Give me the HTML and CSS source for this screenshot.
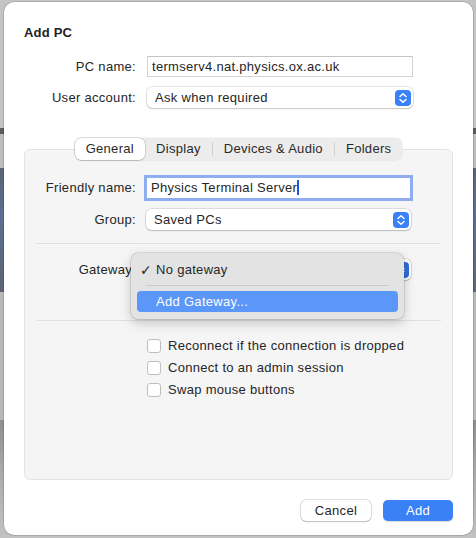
FILE: index.html
```html
<!DOCTYPE html>
<html>
<head>
<meta charset="utf-8">
<link rel="stylesheet" href="styles.css">
</head>
<body>
<div class="dialog">
  <div class="title">Add PC</div>
  <div class="form top-form">
    <label class="lbl">PC name:</label>
    <div class="field">termserv4.nat.physics.ox.ac.uk</div>
    <label class="lbl">User account:</label>
    <div class="popup">Ask when required
      <svg class="stepper" viewBox="0 0 16 16"><rect width="16" height="16" rx="4" fill="#3a80f6"/><path d="M5 6.5 L8 3.8 L11 6.5 M5 9.5 L8 12.2 L11 9.5" stroke="#fff" stroke-width="1.5" fill="none" stroke-linecap="round" stroke-linejoin="round"/></svg>
    </div>
  </div>

  <div class="tabs">
    <div class="tab selected">General</div>
    <div class="tab">Display</div>
    <div class="sep"></div>
    <div class="tab">Devices &amp; Audio</div>
    <div class="sep"></div>
    <div class="tab">Folders</div>
  </div>

  <div class="box">
    <div class="form box-form">
      <label class="lbl">Friendly name:</label>
      <div class="field focused">Physics Terminal Server<span class="caret"></span></div>
      <label class="lbl">Group:</label>
      <div class="popup">Saved PCs
        <svg class="stepper" viewBox="0 0 16 16"><rect width="16" height="16" rx="4" fill="#3a80f6"/><path d="M5 6.5 L8 3.8 L11 6.5 M5 9.5 L8 12.2 L11 9.5" stroke="#fff" stroke-width="1.5" fill="none" stroke-linecap="round" stroke-linejoin="round"/></svg>
      </div>
    </div>
    <div class="hr hr1"></div>
    <div class="form box-form gw-form">
      <label class="lbl">Gateway:</label>
      <div class="popup">
        <svg class="stepper" viewBox="0 0 16 16"><rect width="16" height="16" rx="4" fill="#2f6fdc"/><path d="M5 6.5 L8 3.8 L11 6.5 M5 9.5 L8 12.2 L11 9.5" stroke="#fff" stroke-width="1.5" fill="none" stroke-linecap="round" stroke-linejoin="round"/></svg>
      </div>
    </div>
    <div class="hr hr2"></div>
    <div class="checks">
      <div class="check"><span class="cb"></span>Reconnect if the connection is dropped</div>
      <div class="check"><span class="cb"></span>Connect to an admin session</div>
      <div class="check"><span class="cb"></span>Swap mouse buttons</div>
    </div>

    <div class="menu">
      <div class="item"><span class="tick">✓</span>No gateway</div>
      <div class="menu-sep"></div>
      <div class="item hl">Add Gateway...</div>
    </div>
  </div>

  <div class="buttons">
    <div class="btn cancel">Cancel</div>
    <div class="btn add">Add</div>
  </div>
</div>
</body>
</html>
```

FILE: styles.css
```css
html, body {
  margin: 0;
  padding: 0;
}
body {
  width: 476px;
  height: 538px;
  overflow: hidden;
  background:
    linear-gradient(to bottom, #c4c4c4 0, #c4c4c4 128px, #5d5d5d 128px, #5d5d5d 134px, #bdbdbd 134px, #bdbdbd 168px, #596474 168px, #5a6f92 215px, #5d6473 292px, #b9b9b9 292px, #b9b9b9 420px, #8f8f8f 420px, #a9a9a9 470px, #c2c2c2 538px);
  font-family: "Liberation Sans", Arial, sans-serif;
  font-size: 13px;
  letter-spacing: 0.3px;
  color: #262626;
}
.dialog {
  box-sizing: border-box;
  margin: 2px 3px 0 4px;
  width: 469px;
  height: 533px;
  background: #ffffff;
  border-radius: 10px;
  box-shadow: 0 0 0 0.5px rgba(0,0,0,0.25);
  padding: 22px 20px 0 20px;
}
.title {
  font-weight: bold;
  font-size: 13px;
  line-height: 18px;
  color: #222;
  letter-spacing: 0.2px;
}
.form {
  display: grid;
  grid-template-columns: 112px 266px;
  column-gap: 11px;
  row-gap: 10px;
  align-items: center;
}
.top-form {
  margin-top: 14px;
}
.lbl {
  text-align: right;
  white-space: nowrap;
  line-height: 16px;
}
.field {
  box-sizing: border-box;
  height: 21px;
  border: 1px solid #d3d3d3;
  border-top-color: #c4c4c4;
  background: #fff;
  padding: 0 4px;
  line-height: 19px;
  white-space: nowrap;
  overflow: hidden;
}
.popup {
  position: relative;
  box-sizing: border-box;
  height: 21px;
  background: #fff;
  border-radius: 5px;
  box-shadow: 0 0 0 0.5px rgba(0,0,0,0.2), 0 1px 1.5px rgba(0,0,0,0.15);
  padding: 0 8px;
  line-height: 21px;
  white-space: nowrap;
}
.stepper {
  position: absolute;
  right: 2px;
  top: 2.5px;
  width: 16px;
  height: 16px;
}
.tabs {
  position: relative;
  z-index: 1;
  display: flex;
  align-items: center;
  width: max-content;
  margin: 30px auto 0;
  height: 22px;
  box-sizing: border-box;
  background: #ececec;
  border-radius: 6px;
  box-shadow: 0 0 0 0.5px rgba(0,0,0,0.08);
}
.tab {
  height: 22px;
  line-height: 22px;
  padding: 0 11px 0 11px;
  color: #2a2a2a;
}
.tab.selected {
  background: #fff;
  border-radius: 6px;
  box-shadow: 0 0 0 0.5px rgba(0,0,0,0.22), 0 1px 1.5px rgba(0,0,0,0.12);
  padding: 0 11px;
}
.sep {
  width: 1px;
  height: 14px;
  background: #cfcfcf;
}
.box {
  position: relative;
  margin-top: -11px;
  height: 331px;
  box-sizing: border-box;
  background: #f5f5f5;
  border: 1px solid #e3e3e3;
  border-radius: 6px;
  padding-top: 27px;
}
.box-form {
  grid-template-columns: 111px 265px;
  column-gap: 10px;
}
.field.focused {
  height: 22px;
  border: 1px solid #8fb0ee;
  box-shadow: 0 0 0 2px #8eacef;
  line-height: 20px;
}
.caret {
  display: inline-block;
  width: 2px;
  height: 15px;
  background: #1f5ad6;
  vertical-align: -3px;
  margin-left: 0;
}
.hr {
  height: 1px;
  background: #e0e0e0;
  margin: 0 11px 0 12px;
}
.hr1 {
  margin-top: 13px;
}
.gw-form {
  margin-top: 15px;
}
.hr2 {
  margin-top: 40px;
}
.checks {
  margin-top: 17px;
  padding-left: 122px;
  display: flex;
  flex-direction: column;
  gap: 6px;
}
.check {
  display: flex;
  align-items: center;
  gap: 7px;
  line-height: 16px;
}
.cb {
  box-sizing: border-box;
  width: 14px;
  height: 14px;
  background: #fff;
  border: 1px solid #bfbfbf;
  border-radius: 3px;
}
.menu {
  position: absolute;
  left: 106px;
  top: 103px;
  width: 273px;
  height: 66px;
  box-sizing: border-box;
  background: #e3e3e3;
  border-radius: 7px;
  box-shadow: 0 0 0 0.5px rgba(0,0,0,0.2), 0 4px 12px rgba(0,0,0,0.2);
  padding: 6px 6px 0 6px;
}
.item {
  height: 22px;
  line-height: 22px;
  padding-left: 19px;
  position: relative;
  color: #262626;
  border-radius: 4px;
}
.tick {
  position: absolute;
  left: 3px;
  top: 0;
  font-size: 14px;
  font-family: "DejaVu Sans", sans-serif;
}
.menu-sep {
  height: 1px;
  background: #cbcbcb;
  margin: 4px 9px 5px 9px;
}
.item.hl {
  background: #5b97f8;
  color: #fff;
  height: 21px;
  line-height: 21px;
}
.buttons {
  display: flex;
  justify-content: flex-end;
  gap: 12px;
  margin-top: 20px;
  padding-right: 0;
}
.btn {
  box-sizing: border-box;
  width: 70px;
  height: 21px;
  line-height: 21px;
  text-align: center;
  border-radius: 5px;
}
.cancel {
  background: #fff;
  box-shadow: 0 0 0 0.5px rgba(0,0,0,0.25), 0 1px 1.5px rgba(0,0,0,0.15);
  color: #262626;
}
.add {
  background: #3a81f6;
  color: #fff;
  box-shadow: 0 0.5px 1px rgba(0,0,0,0.15);
}
```
